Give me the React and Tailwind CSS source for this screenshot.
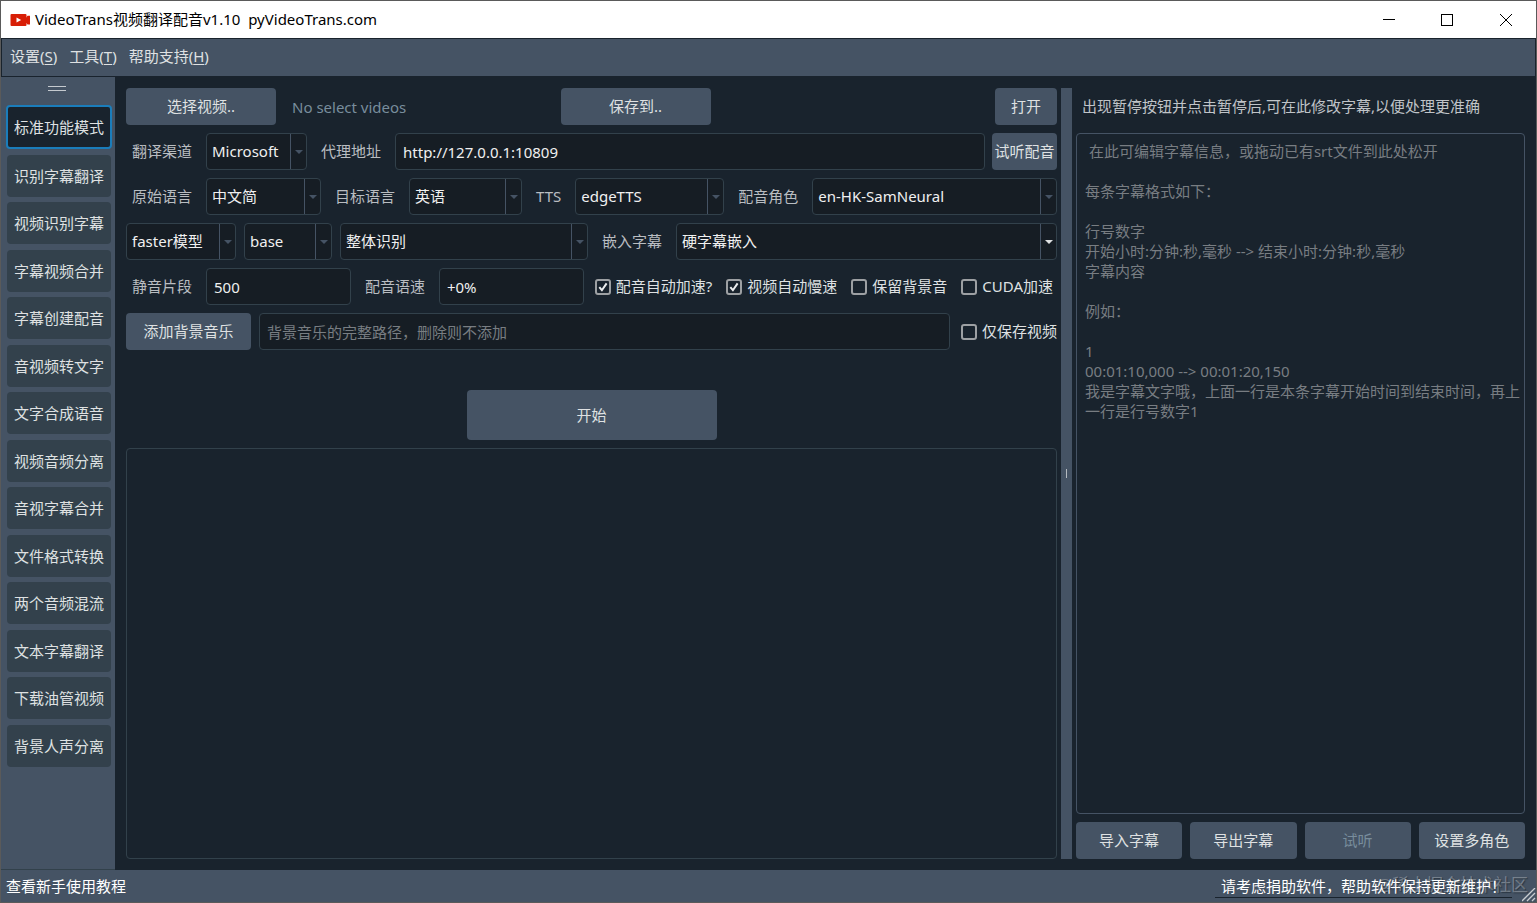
import React, { useState } from "react";

const modes = [
  "标准功能模式",
  "识别字幕翻译",
  "视频识别字幕",
  "字幕视频合并",
  "字幕创建配音",
  "音视频转文字",
  "文字合成语音",
  "视频音频分离",
  "音视字幕合并",
  "文件格式转换",
  "两个音频混流",
  "文本字幕翻译",
  "下载油管视频",
  "背景人声分离",
];

const menus = [
  { label: "设置", key: "S" },
  { label: "工具", key: "T" },
  { label: "帮助支持", key: "H" },
];

const subtitleHelp = ` 在此可编辑字幕信息，或拖动已有srt文件到此处松开

每条字幕格式如下：

行号数字
开始小时:分钟:秒,毫秒 --> 结束小时:分钟:秒,毫秒
字幕内容

例如：

1
00:01:10,000 --> 00:01:20,150
我是字幕文字哦，上面一行是本条字幕开始时间到结束时间，再上一行是行号数字1`;

const Button = ({ className = "", children, ...props }) => (
  <button
    type="button"
    className={`h-[37px] rounded bg-[#455364] pb-[2px] text-center whitespace-nowrap text-[#dfe1e2] disabled:text-[#788d9c] ${className}`}
    {...props}
  >
    {children}
  </button>
);

const Label = ({ htmlFor, children }) => (
  <label htmlFor={htmlFor} className="shrink-0 pb-[2px] whitespace-nowrap text-[#b9bdc1]">
    {children}
  </label>
);

const Select = ({ id, name, options, className = "", active = false }) => (
  <div
    className={`grid h-[37px] rounded border border-[#32414b] bg-[#161d24] ${className}`}
  >
    <select
      id={id}
      aria-label={name}
      className="col-start-1 row-start-1 w-full min-w-0 appearance-none rounded bg-transparent pr-4 pb-[2px] pl-[5px] text-[#f0f0f0] outline-none"
    >
      {options.map((option) => (
        <option key={option}>{option}</option>
      ))}
    </select>
    <span
      className={`pointer-events-none col-start-1 row-start-1 flex w-4 items-center justify-center justify-self-end border-l border-[#455364] ${
        active ? "text-[#dfe1e2]" : "text-[#455364]"
      }`}
    >
      <svg width="8" height="4" viewBox="0 0 8 4" fill="currentColor">
        <path d="M0 0h8L4 4z" />
      </svg>
    </span>
  </div>
);

const Input = ({ className = "", ...props }) => (
  <input
    type="text"
    className={`h-[37px] min-w-0 rounded border border-[#32414b] bg-[#161d24] px-[7px] text-[#f0f0f0] outline-none placeholder:text-[#787d82] ${className}`}
    {...props}
  />
);

const CheckBox = ({ label, defaultChecked = false }) => (
  <label className="flex shrink-0 items-center gap-[5px] whitespace-nowrap text-[#dfe1e2]">
    <span className="grid h-4 w-4">
      <input
        type="checkbox"
        defaultChecked={defaultChecked}
        className="peer col-start-1 row-start-1 h-4 w-4 appearance-none rounded-[3px] border-2 border-[#9da0a3]"
      />
      <svg
        viewBox="0 0 16 16"
        className="pointer-events-none invisible col-start-1 row-start-1 h-4 w-4 peer-checked:visible"
        fill="none"
        stroke="#eceeef"
        strokeWidth="2"
      >
        <path d="M4.3 8.2l2.6 3L11.6 4.4" />
      </svg>
    </span>
    <span className="pb-[2px]">{label}</span>
  </label>
);

const TitleBar = () => (
  <header className="flex h-[37px] items-center bg-white text-black">
    <svg className="mr-[5px] ml-[9px]" width="20" height="12" viewBox="0 0 20 12">
      <rect x="0.5" width="16" height="12" rx="1" fill="#d81e06" />
      <path d="M16 3.5l1.6-1.8H20v8.8h-2.4L16 8.7z" fill="#d81e06" />
      <path d="M6.5 3.4v5.2L11.2 6z" fill="#fff" />
    </svg>
    <h1 className="flex-1 pb-[2px] whitespace-pre">
      VideoTrans视频翻译配音v1.10{"  "}pyVideoTrans.com
    </h1>
    <div className="flex">
      <button type="button" aria-label="最小化" className="grid h-9 w-[58px] place-items-center">
        <svg width="12" height="12" viewBox="0 0 12 12" stroke="#000">
          <path d="M0 5.5h12" />
        </svg>
      </button>
      <button type="button" aria-label="最大化" className="grid h-9 w-[58px] place-items-center">
        <svg width="12" height="12" viewBox="0 0 12 12" stroke="#000" fill="none">
          <rect x="0.5" y="0.5" width="11" height="11" />
        </svg>
      </button>
      <button type="button" aria-label="关闭" className="grid h-9 w-[60px] place-items-center">
        <svg width="12" height="12" viewBox="0 0 12 12" stroke="#000">
          <path d="M0 0l12 12M12 0L0 12" />
        </svg>
      </button>
    </div>
  </header>
);

const Sidebar = () => {
  const [mode, setMode] = useState(modes[0]);

  return (
    <aside className="w-[114px] shrink-0 border-b border-[#32414b] bg-[#455364] pt-2">
      <svg className="ml-[47px]" width="18" height="6" viewBox="0 0 18 6" stroke="#c5cacf">
        <path d="M0 1.5h18M0 5.5h18" />
      </svg>
      <nav className="mt-[14px] flex h-[662px] flex-col items-center justify-between pl-[2px]">
        {modes.map((item) => (
          <button
            key={item}
            type="button"
            onClick={() => setMode(item)}
            className={
              item === mode
                ? "h-11 w-[106px] rounded border-2 border-[#1a7dbb] bg-[#19232d] whitespace-nowrap text-[#dfe1e2]"
                : "h-[42px] w-[104px] rounded bg-[#33414c] whitespace-nowrap text-[#dfe1e2]"
            }
          >
            {item}
          </button>
        ))}
      </nav>
    </aside>
  );
};

const Settings = () => (
  <main className="flex min-w-0 flex-[931_1_0%] flex-col gap-2">
    <div className="flex items-center">
      <Button className="w-[150px]">选择视频..</Button>
      <div className="flex-1">
        <span className="pl-4 text-[#788d9c]">No select videos</span>
      </div>
      <Button className="w-[150px]">保存到..</Button>
      <span className="flex-1" />
      <Button className="w-[62px]">打开</Button>
    </div>

    <div className="flex items-center gap-[14px] pl-[6px]">
      <Label htmlFor="channel">翻译渠道</Label>
      <Select id="channel" options={["Microsoft", "Google"]} className="w-[101px]" />
      <Label htmlFor="proxy">代理地址</Label>
      <div className="flex flex-1 gap-[7px]">
        <Input id="proxy" defaultValue="http://127.0.0.1:10809" className="flex-1" />
        <Button className="w-[65px]">试听配音</Button>
      </div>
    </div>

    <div className="flex items-center gap-[14px] pl-[6px]">
      <Label htmlFor="source">原始语言</Label>
      <Select id="source" options={["中文简", "英语"]} className="w-[115px]" />
      <Label htmlFor="target">目标语言</Label>
      <Select id="target" options={["英语", "中文简"]} className="w-[113px]" />
      <Label htmlFor="tts">TTS</Label>
      <Select id="tts" options={["edgeTTS"]} className="w-[149px]" />
      <Label htmlFor="role">配音角色</Label>
      <Select id="role" options={["en-HK-SamNeural"]} className="flex-1" />
    </div>

    <div className="flex items-center gap-[14px]">
      <div className="flex gap-2">
        <Select name="识别模型" options={["faster模型"]} className="w-[110px]" />
        <Select name="模型大小" options={["base", "small"]} className="w-[88px]" />
        <Select name="识别方式" options={["整体识别"]} className="w-[248px]" />
      </div>
      <Label htmlFor="embed">嵌入字幕</Label>
      <Select id="embed" options={["硬字幕嵌入", "软字幕嵌入"]} className="flex-1" active />
    </div>

    <div className="flex items-center gap-[11px] pr-1 pl-[6px]">
      <div className="flex flex-1 items-center gap-[14px]">
        <Label htmlFor="silence">静音片段</Label>
        <Input id="silence" defaultValue="500" className="w-0 flex-1" />
        <Label htmlFor="rate">配音语速</Label>
        <Input id="rate" defaultValue="+0%" className="w-0 flex-1" />
      </div>
      <div className="flex gap-[14px]">
        <CheckBox label="配音自动加速?" defaultChecked />
        <CheckBox label="视频自动慢速" defaultChecked />
        <CheckBox label="保留背景音" />
        <CheckBox label="CUDA加速" />
      </div>
    </div>

    <div className="flex items-center">
      <Button className="mr-2 w-[125px]">添加背景音乐</Button>
      <Input
        aria-label="背景音乐"
        placeholder="背景音乐的完整路径，删除则不添加"
        className="mr-[11px] flex-1"
      />
      <CheckBox label="仅保存视频" />
    </div>

    <button
      type="button"
      className="mt-8 h-[50px] w-[250px] self-center rounded bg-[#455364] text-[#dfe1e2]"
    >
      开始
    </button>
    <section className="flex-1 rounded border border-[#32414b]" />
  </main>
);

const SubtitlePanel = () => (
  <section className="flex min-w-0 flex-[449_1_0%] flex-col gap-2">
    <label
      htmlFor="subtitle"
      className="flex h-[37px] items-center pb-[2px] pl-[6px] whitespace-nowrap text-[#c0c4c8]"
    >
      出现暂停按钮并点击暂停后,可在此修改字幕,以便处理更准确
    </label>
    <textarea
      id="subtitle"
      placeholder={subtitleHelp}
      className="flex-1 resize-none rounded border border-[#455364] bg-transparent pt-[7px] pr-[2px] pl-2 text-[#dfe1e2] outline-none placeholder:text-[#787d82]"
    />
    <div className="grid grid-cols-4 gap-2">
      <Button>导入字幕</Button>
      <Button>导出字幕</Button>
      <Button disabled>试听</Button>
      <Button>设置多角色</Button>
    </div>
  </section>
);

const StatusBar = () => (
  <footer className="relative flex h-8 items-center justify-between bg-[#455364] pr-6 pl-[5px] text-white">
    <span className="pointer-events-none absolute right-2 bottom-[7px] text-[17px] whitespace-nowrap text-white/30 [text-shadow:1px_1px_1px_#19232d99]">
      @稀土掘金技术社区
    </span>
    <a href="#help">查看新手使用教程</a>
    <a
      href="#donate"
      className="relative flex h-6 items-center border-b border-[#19232d] px-[6px]"
    >
      请考虑捐助软件，帮助软件保持更新维护！
    </a>
    <svg
      className="absolute right-0 bottom-0"
      width="14"
      height="14"
      viewBox="0 0 14 14"
      stroke="#c9cdd0"
      strokeWidth="1.3"
    >
      <path d="M0 13L13 0M5 13l8-8M10 13l3-3" />
    </svg>
  </footer>
);

const App = () => (
  <div className="flex min-h-screen flex-col border border-[#5a5a5a] bg-[#19232d] font-['Noto_Sans','Noto_Sans_CJK_SC',sans-serif] text-[15px] leading-5">
    <TitleBar />
    <nav className="flex h-[39px] items-center gap-3 border border-[#19232d] bg-[#455364] pb-1 pl-2 text-[#dfe1e2]">
      {menus.map((menu) => (
        <button key={menu.key} type="button">
          {menu.label}(<u className="underline-offset-2">{menu.key}</u>)
        </button>
      ))}
    </nav>
    <div className="flex flex-1">
      <Sidebar />
      <div className="flex min-w-0 flex-1 gap-1 px-[11px] py-[11px]">
        <Settings />
        <div className="flex w-[11px] shrink-0 items-center justify-center bg-[#455364]">
          <span className="h-[9px] w-px bg-[#b4bac0]" />
        </div>
        <SubtitlePanel />
      </div>
    </div>
    <StatusBar />
  </div>
);

export default App;
